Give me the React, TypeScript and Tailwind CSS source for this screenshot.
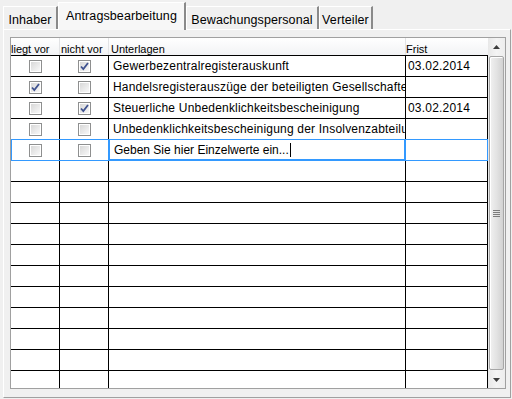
import React from 'react';

type Row = {
  liegt?: boolean;
  nicht?: boolean;
  text?: string;
  frist?: string;
  box?: boolean;
  focus?: boolean;
};

const rows: Row[] = [
  { box: true, liegt: false, nicht: true, text: 'Gewerbezentralregisterauskunft', frist: '03.02.2014' },
  { box: true, liegt: true, nicht: false, text: 'Handelsregisterauszüge der beteiligten Gesellschafter' },
  { box: true, liegt: false, nicht: true, text: 'Steuerliche Unbedenklichkeitsbescheinigung', frist: '03.02.2014' },
  { box: true, liegt: false, nicht: false, text: 'Unbedenklichkeitsbescheinigung der Insolvenzabteilung' },
  { box: true, liegt: false, nicht: false, text: 'Geben Sie hier Einzelwerte ein...', focus: true },
  {}, {}, {}, {}, {}, {}, {}, {}, {}, {}, {},
];

function CheckBox({ checked }: { checked?: boolean }) {
  return (
    <div className="w-[13px] h-[13px] border border-[#8e8f8f] bg-white p-[1px]">
      <div className="w-full h-full bg-gradient-to-br from-[#d8d8d8] to-[#f8f8f8] flex items-center justify-center">
        {checked && (
          <svg width="9" height="9" viewBox="0 0 9 9">
            <path d="M1 4.5 L3.3 7 L8 1" fill="none" stroke="#3f528f" strokeWidth="1.8" />
          </svg>
        )}
      </div>
    </div>
  );
}

function Tab({ label, active, width }: { label: string; active?: boolean; width: string }) {
  if (active) {
    return (
      <div
        className={`${width} h-[28px] -mb-px relative z-10 bg-[#f7f7f7] border-t border-l border-white border-r-2 border-r-[#8a8a8a] flex justify-center pt-[4px]`}
      >
        <span>{label}</span>
      </div>
    );
  }
  return (
    <div
      className={`${width} h-[23px] bg-[#f0f0f0] border-t border-l border-white border-r-2 border-r-[#8a8a8a] flex justify-center pt-[4px]`}
    >
      <span>{label}</span>
    </div>
  );
}

export default function App() {
  return (
    <div className="w-[512px] h-[399px] bg-[#f0f0f0] overflow-hidden font-['Liberation_Sans',Arial,sans-serif] text-[12px] text-black">
      {/* Tab strip */}
      <div className="h-[29px] flex items-end pl-[3px] text-[12.5px] tracking-[0.1px]">
        <Tab label="Inhaber" width="w-[55px]" />
        <Tab label="Antragsbearbeitung" width="w-[128px]" active />
        <Tab label="Bewachungspersonal" width="w-[133px]" />
        <Tab label="Verteiler" width="w-[54px]" />
      </div>

      {/* Tab page */}
      <div className="ml-[3px] w-[508px] h-[369px] border-t border-l border-white border-r border-b border-r-[#a0a0a0] border-b-[#a0a0a0] pl-[6px] pt-[7px]">
        <div className="w-[496px] h-[352px] border border-[#a0a0a0] bg-white flex">
          {/* Table */}
          <div className="w-[477px] flex flex-col overflow-hidden">
            {/* Header */}
            <div className="h-[17px] flex text-[11px] bg-gradient-to-b from-white to-[#f2f3f5] shrink-0">
              <div className="w-[49px] border-r border-[#e2e3e5] pt-[3px] whitespace-nowrap">liegt vor</div>
              <div className="w-[49px] border-r border-[#e2e3e5] pl-[1px] pt-[3px] whitespace-nowrap">nicht vor</div>
              <div className="w-[297px] border-r border-[#e2e3e5] pl-[2px] pt-[3px]">Unterlagen</div>
              <div className="w-[82px] pt-[3px]">Frist</div>
            </div>

            {/* Rows */}
            <div className="flex-1 overflow-hidden tracking-[0.2px]">
              {rows.map((r, i) => {
                const prevFocus = i > 0 && rows[i - 1].focus;
                const topColor = r.focus || prevFocus ? 'border-t-[#3399ff]' : 'border-t-black';
                return (
                  <div key={i} className={`h-[21px] flex border-t ${topColor}`}>
                    <div
                      className={`w-[49px] border-r border-r-black flex items-center justify-center ${
                        r.focus ? 'shadow-[inset_1px_0_0_#3399ff]' : ''
                      }`}
                    >
                      {r.box && <CheckBox checked={r.liegt} />}
                    </div>
                    <div
                      className={`w-[49px] border-r flex items-center justify-center ${
                        r.focus ? 'border-r-[#3399ff]' : 'border-r-black'
                      }`}
                    >
                      {r.box && <CheckBox checked={r.nicht} />}
                    </div>
                    <div
                      className={`w-[297px] border-r flex items-center whitespace-nowrap overflow-hidden ${
                        r.focus
                          ? 'border-r-[#3399ff] pl-[5px] tracking-normal shadow-[inset_1px_0_0_#3399ff,inset_-1px_0_0_#3399ff,inset_0_-1px_0_#3399ff]'
                          : 'border-r-black pl-[4px]'
                      }`}
                    >
                      {r.text}
                      {r.focus && <span className="inline-block w-px h-[14px] bg-black ml-[1px]" />}
                    </div>
                    <div
                      className={`w-[82px] border-r flex items-center pl-[2px] whitespace-nowrap ${
                        r.focus ? 'border-r-[#3399ff]' : 'border-r-black'
                      }`}
                    >
                      {r.frist}
                    </div>
                  </div>
                );
              })}
            </div>
          </div>

          {/* Scrollbar */}
          <div className="w-[17px] flex flex-col bg-gradient-to-r from-[#e8e8e8] via-[#f4f4f4] to-[#ededed]">
            <div className="h-[17px] flex items-center justify-center shrink-0">
              <svg width="7" height="4" viewBox="0 0 7 4">
                <path d="M0 4 L3.5 0 L7 4 Z" fill="#3c3c3c" />
              </svg>
            </div>
            <div className="flex-1 px-[1px] py-[1px]">
              <div className="h-full rounded-[2px] border border-[#a6a6a6] bg-gradient-to-r from-[#f1f1f1] via-[#e3e3e3] to-[#d2d2d2] shadow-[inset_1px_1px_0_#ffffff] flex items-center justify-center">
                <div className="flex flex-col gap-[1px]">
                  <div className="w-[7px] h-px bg-[#7c7c7c]" />
                  <div className="w-[7px] h-px bg-[#7c7c7c]" />
                  <div className="w-[7px] h-px bg-[#7c7c7c]" />
                  <div className="w-[7px] h-px bg-[#7c7c7c]" />
                </div>
              </div>
            </div>
            <div className="h-[17px] flex items-center justify-center shrink-0">
              <svg width="7" height="4" viewBox="0 0 7 4">
                <path d="M0 0 L3.5 4 L7 0 Z" fill="#3c3c3c" />
              </svg>
            </div>
          </div>
        </div>
      </div>
    </div>
  );
}
